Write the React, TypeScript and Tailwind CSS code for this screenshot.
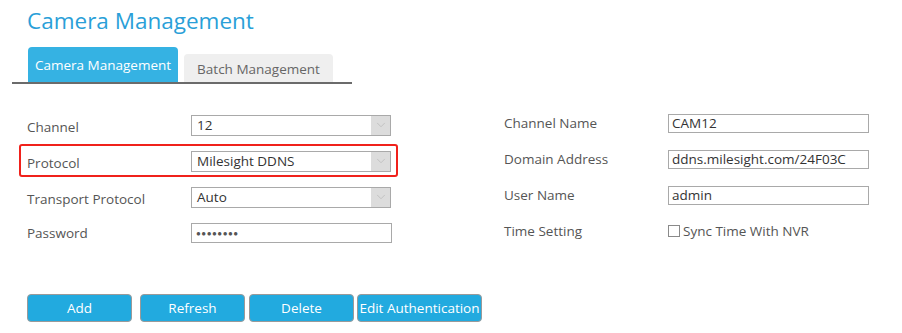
import { ChevronDown } from 'lucide-react';

const font = { fontFamily: '"Segoe UI", "Open Sans", "Noto Sans", sans-serif' };

function Select({ value }: { value: string }) {
  return (
    <div className="flex h-[21px] w-[200px] items-stretch border border-[#a9a9a9] bg-white">
      <div className="flex-1 pl-[5px] text-[13.5px] leading-[19px] text-[#333]">{value}</div>
      <div className="flex w-[19px] items-center justify-center bg-[#dcdcdc]">
        <ChevronDown className="h-[14px] w-[14px] text-[#b8b8b8]" strokeWidth={1.2} />
      </div>
    </div>
  );
}

function Input({ value }: { value: string }) {
  return (
    <div className="h-[19px] w-[201px] border border-[#a9a9a9] bg-white pl-[3px] text-[13.5px] leading-[17px] text-[#333]">
      {value}
    </div>
  );
}

function Row({ label, children, low = false }: { label: string; children: React.ReactNode; low?: boolean }) {
  return (
    <div className="flex h-[36px] items-center">
      <div className={`w-[164px] text-[13.5px] text-[#555] ${low ? 'pt-[5px]' : 'pt-[1px]'}`}>{label}</div>
      {children}
    </div>
  );
}

export default function App() {
  return (
    <div className="h-[333px] w-[902px] bg-white" style={font}>
      <div className="pl-[27px] pt-[4px]">
        <h1 className="text-[22.5px] leading-[34px] text-[#2a9fd8]">Camera Management</h1>
      </div>

      <div className="ml-[12px] mt-[9px] flex w-[340px] items-end gap-[6px] border-b-2 border-[#6b6b6b] pl-[16px]">
        <div className="flex h-[35px] w-[150px] items-center justify-center rounded-t-[4px] bg-[#35b2e3] pt-[2px] text-[13.5px] text-white">
          Camera Management
        </div>
        <div className="flex h-[28px] w-[149px] items-center justify-center rounded-t-[4px] bg-[#efefef] pt-[2px] text-[13.5px] text-[#666]">
          Batch Management
        </div>
      </div>

      <div className="mt-[23px] flex pl-[27px]">
        <div className="w-[477px]">
          <Row label="Channel" low>
            <Select value="12" />
          </Row>
          <div className="relative">
            <div className="absolute -left-[8px] top-[1px] h-[33px] w-[379px] rounded-[3px] border-2 border-[#f0211b]" />
            <Row label="Protocol" low>
              <Select value="Milesight DDNS" />
            </Row>
          </div>
          <Row label="Transport Protocol" low>
            <Select value="Auto" />
          </Row>
          <Row label="Password">
            <div className="flex h-[20px] w-[201px] items-center border border-[#a9a9a9] bg-white pl-[4px] text-[8px] tracking-[0.5px] text-[#555]">
              ●●●●●●●●
            </div>
          </Row>
        </div>
        <div className="-mt-[2px]">
          <Row label="Channel Name">
            <Input value="CAM12" />
          </Row>
          <Row label="Domain Address">
            <Input value="ddns.milesight.com/24F03C" />
          </Row>
          <Row label="User Name">
            <Input value="admin" />
          </Row>
          <Row label="Time Setting">
            <label className="flex items-center gap-[3px] text-[13.5px] text-[#555]">
              <span className="h-[12px] w-[12px] border border-[#8a8a8a] bg-white" />
              Sync Time With NVR
            </label>
          </Row>
        </div>
      </div>

      <div className="mt-[43px] flex gap-[3px] pl-[27px] text-[13.5px] text-white">
        <button className="mr-[5px] h-[28px] w-[105px] rounded-[4px] border border-[#9a9a9a] bg-[#22aadf]">Add</button>
        <button className="mr-[1px] h-[28px] w-[105px] rounded-[4px] border border-[#9a9a9a] bg-[#22aadf]">Refresh</button>
        <button className="h-[28px] w-[105px] rounded-[4px] border border-[#9a9a9a] bg-[#22aadf]">Delete</button>
        <button className="h-[28px] w-[125px] whitespace-nowrap rounded-[4px] border border-[#9a9a9a] bg-[#22aadf]">Edit Authentication</button>
      </div>
    </div>
  );
}
